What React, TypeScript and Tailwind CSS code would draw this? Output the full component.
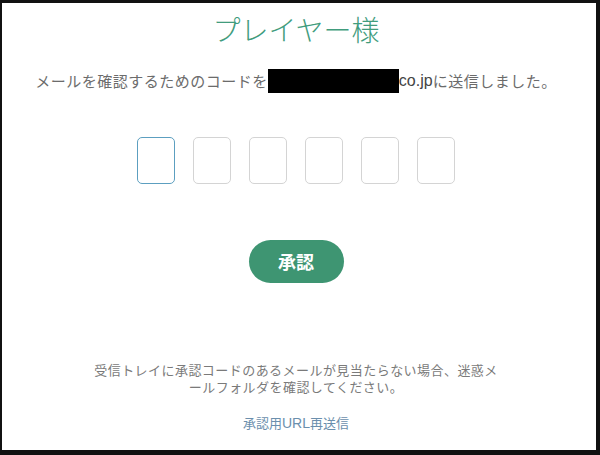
import { useState } from "react";

const jp = "font-['Noto_Sans_CJK_JP',sans-serif]";

const CodeInputs = () => {
  const [code, setCode] = useState(["", "", "", "", "", ""]);

  return (
    <div className="flex gap-[18px]">
      {code.map((c, i) => (
        <input
          key={i}
          value={c}
          maxLength={1}
          onChange={(e) => {
            const next = [...code];
            next[i] = e.target.value;
            setCode(next);
          }}
          className={`w-[38px] h-[47px] rounded-[5px] border bg-white text-center text-xl outline-none ${
            i === 0 ? "border-[#5c9fc0]" : "border-[#d4d4d4]"
          }`}
        />
      ))}
    </div>
  );
};

export default function App() {
  return (
    <div className="w-[600px] h-[455px] bg-[#111] pt-[3px] pl-[2px] pr-[4px] pb-[5px]">
      <div className={`h-full bg-white pr-[6px] flex flex-col items-center ${jp}`}>
        <h1 className="mt-[8px] text-[28px] leading-[36px] font-light text-[#419c7d]">
          プレイヤー様
        </h1>

        <p className="mt-[22px] flex items-center text-[15px] leading-[24px] tracking-[0.5px] text-[#6b6b6b]">
          <span>メールを確認するためのコードを</span>
          <span className="inline-block w-[131px] h-[24px] bg-black" />
          <span className="font-['Liberation_Sans',sans-serif] tracking-normal text-[16px] text-[#444]">
            co.jp
          </span>
          <span>に送信しました。</span>
        </p>

        <div className="mt-[44px]">
          <CodeInputs />
        </div>

        <button className="mt-[56px] w-[95px] h-[43px] rounded-full bg-[#3e9572] text-white text-[18px] font-bold">
          承認
        </button>

        <p className="mt-[78px] w-[405px] text-center text-[13px] leading-[17px] tracking-[0.45px] text-[#7a7a7a]">
          受信トレイに承認コードのあるメールが見当たらない場合、迷惑メールフォルダを確認してください。
        </p>

        <a href="#" className="mt-[18px] text-[13px] leading-[20px] text-[#6b8fad]">
          承認用<span className="font-['Liberation_Sans',sans-serif] text-[14px]">URL</span>再送信
        </a>
      </div>
    </div>
  );
}
